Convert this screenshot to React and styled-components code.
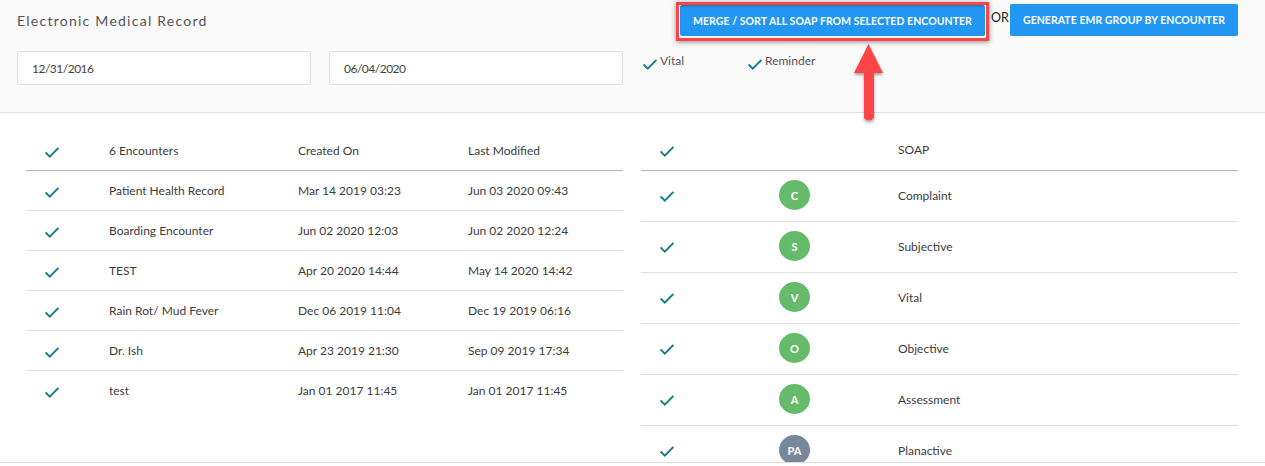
import React from 'react';
import styled, { createGlobalStyle } from 'styled-components';

const GlobalStyle = createGlobalStyle`
  html, body {
    margin: 0;
    padding: 0;
    background: #fff;
    font-family: 'Lato', 'Liberation Sans', sans-serif;
    color: #3c3c3c;
  }
  * { box-sizing: border-box; }
`;

const encounters = [
  ['Patient Health Record', 'Mar 14 2019 03:23', 'Jun 03 2020 09:43'],
  ['Boarding Encounter', 'Jun 02 2020 12:03', 'Jun 02 2020 12:24'],
  ['TEST', 'Apr 20 2020 14:44', 'May 14 2020 14:42'],
  ['Rain Rot/ Mud Fever', 'Dec 06 2019 11:04', 'Dec 19 2019 06:16'],
  ['Dr. Ish', 'Apr 23 2019 21:30', 'Sep 09 2019 17:34'],
  ['test', 'Jan 01 2017 11:45', 'Jan 01 2017 11:45'],
];

const soap = [
  ['C', 'Complaint', '#66bb6a'],
  ['S', 'Subjective', '#66bb6a'],
  ['V', 'Vital', '#66bb6a'],
  ['O', 'Objective', '#66bb6a'],
  ['A', 'Assessment', '#66bb6a'],
  ['PA', 'Planactive', '#78889b'],
];

const Check = () => (
  <CheckSvg viewBox="0 0 14 11" width="14" height="11">
    <path d="M0.6 5.4 L4.8 9.6 L13.4 0.9" fill="none" stroke="#1c7d8c" strokeWidth="2" />
  </CheckSvg>
);

const App = () => (
  <Page>
    <GlobalStyle />
    <Header>
      <HeaderLeft>
        <Title>Electronic Medical Record</Title>
        <Inputs>
          <DateBox>12/31/2016</DateBox>
          <DateBox>06/04/2020</DateBox>
        </Inputs>
      </HeaderLeft>
      <HeaderRight>
        <Actions>
          <HighlightBox>
            <ActionButton $selected>MERGE / SORT ALL SOAP FROM SELECTED ENCOUNTER</ActionButton>
          </HighlightBox>
          <Or>OR</Or>
          <ActionButton>GENERATE EMR GROUP BY ENCOUNTER</ActionButton>
        </Actions>
        <Options>
          <Option $width="105px"><Check /> Vital</Option>
          <Option><Check /> Reminder</Option>
        </Options>
      </HeaderRight>
    </Header>
    <Arrow viewBox="0 0 32 82" width="32" height="82">
      <defs>
        <filter id="arrowShadow" x="-30%" y="-10%" width="160%" height="125%">
          <feDropShadow dx="0" dy="2" stdDeviation="1.5" floodColor="#000" floodOpacity="0.35" />
        </filter>
      </defs>
      <path
        d="M15.5 1 L30 30 L21 30 L21 75 Q16 80 11 75 L11 30 L1 30 Z"
        fill="#fc4447"
        filter="url(#arrowShadow)"
      />
    </Arrow>
    <Main>
      <LeftPanel>
        <EncounterRow $head>
          <Check />
          <span>6 Encounters</span>
          <span>Created On</span>
          <span>Last Modified</span>
        </EncounterRow>
        {encounters.map((row) => (
          <EncounterRow key={row[0]}>
            <Check />
            <span>{row[0]}</span>
            <span>{row[1]}</span>
            <span>{row[2]}</span>
          </EncounterRow>
        ))}
      </LeftPanel>
      <RightPanel>
        <SoapRow $head>
          <Check />
          <span />
          <span>SOAP</span>
        </SoapRow>
        {soap.map(([code, label, color]) => (
          <SoapRow key={code}>
            <Check />
            <Badge $color={color}>{code}</Badge>
            <span>{label}</span>
          </SoapRow>
        ))}
      </RightPanel>
    </Main>
  </Page>
);

export default App;

const Page = styled.div`
  position: relative;
  width: 1265px;
  height: 466px;
  overflow: hidden;
  font-size: 12px;
`;

const Header = styled.div`
  height: 113px;
  background: #fafafa;
  border-bottom: 1px solid #dedede;
  display: flex;
`;

const HeaderLeft = styled.div`
  width: 641px;
  padding: 12px 0 0 17px;
`;

const Title = styled.div`
  font-size: 14px;
  line-height: 18px;
  letter-spacing: 1.25px;
  color: #555;
`;

const Inputs = styled.div`
  display: flex;
  gap: 18px;
  margin-top: 21px;
`;

const DateBox = styled.div`
  width: 294px;
  height: 34px;
  background: #fff;
  border: 1px solid #dcdcdc;
  border-radius: 2px;
  padding-left: 14px;
  line-height: 34px;
  letter-spacing: -0.5px;
  color: #444;
`;

const HeaderRight = styled.div`
  flex: 1;
`;

const Actions = styled.div`
  display: flex;
  align-items: flex-start;
  padding: 4px 0 0 35px;
`;

const HighlightBox = styled.div`
  margin-top: -2px;
  padding: 0 1px 2px;
  background: #fff;
  border: 3px solid #fc4447;
  box-shadow: 0 1px 5px rgba(0, 0, 0, 0.45);
`;

const ActionButton = styled.button`
  display: block;
  width: ${(p) => (p.$selected ? '305px' : '228px')};
  height: ${(p) => (p.$selected ? '31px' : '32px')};
  padding: 0;
  border: none;
  border-radius: 2px;
  background: #2196f3;
  box-shadow: ${(p) => (p.$selected ? 'inset 0 2px 2px -1px rgba(0, 0, 0, 0.3)' : 'none')};
  color: #fff;
  font-family: inherit;
  font-size: 10.5px;
  font-weight: 700;
  letter-spacing: 0.05px;
  white-space: nowrap;
`;

const Or = styled.span`
  width: 21px;
  margin-top: 6px;
  padding-left: 2px;
  font-size: 12.5px;
  color: #222;
`;

const Options = styled.div`
  display: flex;
  margin-top: 12px;
  padding-left: 2px;
`;

const Option = styled.div`
  width: ${(p) => p.$width || 'auto'};
  display: flex;
  align-items: flex-start;
  gap: 3px;
  line-height: 16px;
  color: #555;
`;

const Arrow = styled.svg`
  position: absolute;
  left: 853px;
  top: 43px;
`;

const Main = styled.div`
  height: 350px;
  border-bottom: 1px solid #dedede;
  display: flex;
  gap: 18px;
  padding: 17px 27px 0 26px;
  overflow: hidden;
`;

const LeftPanel = styled.div`
  width: 597px;
`;

const RightPanel = styled.div`
  width: 597px;
  margin-top: -1px;
`;

const EncounterRow = styled.div`
  height: ${(p) => (p.$head ? '41px' : '40px')};
  display: grid;
  grid-template-columns: 83px 189px 170px 1fr;
  align-items: center;
  border-bottom: 1px solid ${(p) => (p.$head ? '#b4b4b4' : '#dedede')};
  &:last-child { border-bottom-color: transparent; }
`;

const SoapRow = styled.div`
  height: ${(p) => (p.$head ? '42px' : '51px')};
  padding-bottom: ${(p) => (p.$head ? '0' : '2px')};
  display: grid;
  grid-template-columns: 138px 119px 1fr;
  align-items: center;
  border-bottom: 1px solid ${(p) => (p.$head ? '#b4b4b4' : '#dedede')};
`;

const CheckSvg = styled.svg`
  display: block;
  justify-self: start;
  margin: 4px 0 0 19px;
  ${SoapRow} & { margin-top: 3px; }
  ${Option} & { margin: 6px 0 0; }
`;

const Badge = styled.div`
  width: 31px;
  height: 30px;
  border-radius: 50%;
  background: ${(p) => p.$color};
  color: #fff;
  display: flex;
  align-items: center;
  justify-content: center;
  font-size: 11px;
  font-weight: 700;
`;
